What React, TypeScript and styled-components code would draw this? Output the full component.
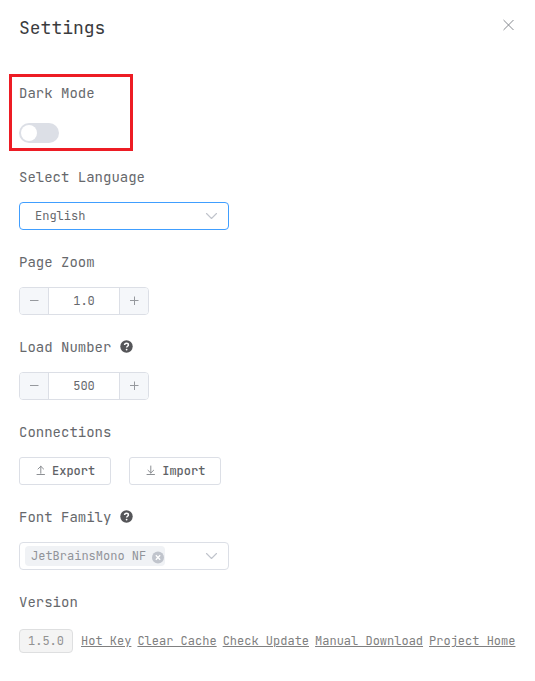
import React, { useState } from "react";
import styled, { createGlobalStyle } from "styled-components";

const GlobalStyle = createGlobalStyle`
  *, *::before, *::after { box-sizing: border-box; }
  body { margin: 0; background: #fff; }
  body, button, input, select {
    font-family: "JetBrains Mono", "DejaVu Sans Mono", monospace;
    font-size: 12px;
    color: #66686c;
  }
`;

const Dialog = styled.main`
  padding: 12px 19px 28px;
`;

const Header = styled.header`
  display: flex;
  justify-content: space-between;
  align-items: flex-start;
  height: 71px;
`;

const Title = styled.h1`
  margin: 0;
  padding-top: 4px;
  font-size: 18px;
  font-weight: 400;
  line-height: 24px;
  color: #3a3b3d;
`;

const CloseButton = styled.button`
  display: flex;
  padding: 5px 0;
  border: 0;
  background: none;
  color: #85888e;
  cursor: pointer;
`;

const Form = styled.form`
  display: flex;
  flex-direction: column;
  gap: 22px;
`;

const Field = styled.div`
  display: flex;
  flex-direction: column;
  align-items: flex-start;
  gap: 15px;
`;

const HighlightedField = styled(Field)`
  position: relative;
  align-self: flex-start;
  gap: 20px;
  margin-bottom: 2px;

  &::after {
    content: "";
    position: absolute;
    inset: -9px -38px -8px -10px;
    border: 3px solid #ed1c24;
    pointer-events: none;
  }
`;

const Label = styled.label`
  display: flex;
  align-items: center;
  gap: 9px;
  font-size: 14px;
  line-height: 20px;
`;

const Switch = styled.input`
  appearance: none;
  display: flex;
  align-items: center;
  width: 40px;
  height: 20px;
  margin: 0;
  padding: 2px;
  border-radius: 10px;
  background: #dcdfe6;
  cursor: pointer;

  &::before {
    content: "";
    width: 16px;
    height: 16px;
    border-radius: 50%;
    background: #fff;
  }
  &:checked {
    justify-content: flex-end;
    background: #409eff;
  }
`;

const SelectBox = styled.div<{ $active?: boolean }>`
  display: grid;
  grid-template-columns: 1fr 34px;
  align-items: center;
  width: 210px;
  height: 28px;
  border: 1px solid ${(p) => (p.$active ? "#409eff" : "#dcdfe6")};
  border-radius: 4px;
  color: #c0c4cc;

  svg.arrow {
    grid-area: 1 / 2;
    justify-self: center;
    pointer-events: none;
  }
`;

const NativeSelect = styled.select`
  grid-area: 1 / 1 / 2 / 3;
  appearance: none;
  height: 26px;
  padding: 0 34px 0 15px;
  border: 0;
  outline: 0;
  background: none;
`;

const TagArea = styled.div`
  display: flex;
  align-items: center;
  padding-left: 5px;
  min-width: 0;
`;

const FontTag = styled.span`
  display: flex;
  align-items: center;
  gap: 5px;
  height: 20px;
  padding: 0 1px 0 6px;
  border-radius: 4px;
  background: #f0f2f5;
  color: #909399;
  white-space: nowrap;
`;

const TagRemove = styled.button`
  display: flex;
  padding: 2px 0 0;
  border: 0;
  background: none;
  cursor: pointer;
`;

const FilterInput = styled.input`
  flex: 1;
  width: 0;
  min-width: 0;
  padding: 0;
  border: 0;
  outline: 0;
  background: none;
`;

const Stepper = styled.div`
  display: flex;
  width: 130px;
  height: 28px;
  border: 1px solid #dcdfe6;
  border-radius: 4px;
  overflow: hidden;
`;

const StepButton = styled.button<{ $side: "left" | "right" }>`
  flex: none;
  display: flex;
  align-items: center;
  justify-content: center;
  width: 29px;
  padding: 0;
  border: 0 solid #dcdfe6;
  border-${(p) => (p.$side === "left" ? "right" : "left")}-width: 1px;
  background: #f5f7fa;
  color: #96999e;
  cursor: pointer;
`;

const StepValue = styled.input`
  flex: 1;
  min-width: 0;
  padding: 0;
  border: 0;
  outline: 0;
  text-align: center;
`;

const ButtonRow = styled.div`
  display: flex;
  gap: 18px;
`;

const ActionButton = styled.button`
  display: flex;
  align-items: center;
  gap: 5px;
  height: 28px;
  padding: 0 15px;
  border: 1px solid #dcdfe6;
  border-radius: 3px;
  background: #fff;
  color: #606266;
  font-weight: 500;
  cursor: pointer;
`;

const VersionRow = styled.div`
  display: flex;
  align-items: center;
  gap: 8px;
  padding-top: 2px;
`;

const VersionTag = styled.span`
  height: 24px;
  padding: 0 8px;
  border: 1px solid #dedfe0;
  border-radius: 4px;
  background: #f4f4f4;
  color: #929292;
  line-height: 22px;
`;

const Links = styled.nav`
  display: flex;
  flex-wrap: wrap;
  gap: 6px;
  margin-right: -8px;
`;

const TextLink = styled.a`
  color: #808080;
  line-height: 20px;
  text-decoration: underline;
  white-space: nowrap;
`;

const CloseIcon = () => (
  <svg width="16" height="16" viewBox="0 0 16 16" fill="none" stroke="currentColor" strokeLinecap="round">
    <path d="M3.8 3.3l9.4 9.4M13.2 3.3l-9.4 9.4" />
  </svg>
);

const ArrowIcon = () => (
  <svg className="arrow" width="14" height="14" viewBox="0 0 14 14" fill="none" stroke="currentColor" strokeWidth="1.1" strokeLinecap="round" strokeLinejoin="round">
    <path d="M2.5 4.5l5 5 5-5" />
  </svg>
);

const HelpIcon = () => (
  <svg width="13" height="14" viewBox="0 0 13 14" aria-hidden="true">
    <circle cx="6.5" cy="6.5" r="6.2" fill="#555659" />
    <path d="M4.6 5.1c0-1.2.9-1.8 1.9-1.8s1.9.6 1.9 1.6c0 1.4-1.8 1.3-1.8 2.7" fill="none" stroke="#fff" strokeWidth="1.5" />
    <circle cx="6.6" cy="9.6" r=".9" fill="#fff" />
  </svg>
);

const RemoveIcon = () => (
  <svg width="13" height="13" viewBox="0 0 13 13" aria-hidden="true">
    <circle cx="7" cy="6.5" r="6" fill="#c0c4cc" />
    <path d="M4.8 4.3l4.4 4.4M9.2 4.3L4.8 8.7" stroke="#fff" strokeWidth="1.3" />
  </svg>
);

const SignIcon = ({ plus }: { plus?: boolean }) => (
  <svg width="12" height="12" viewBox="0 0 12 12" fill="none" stroke="currentColor">
    <path d={plus ? "M2 5.5h8.5M6.5 1.5v8.5" : "M2 5.5h8.5"} />
  </svg>
);

const TransferIcon = ({ up }: { up?: boolean }) => (
  <svg width="12" height="12" viewBox="0 0 12 12" fill="none" stroke="#808388" strokeLinecap="round" strokeLinejoin="round" strokeWidth=".9">
    <path d={up ? "M2 9.5h7.5M5.8 8.3v-7M3 4l2.8-2.7L8.6 4" : "M2 9.5h7.5M5.8 1v7M3 5.3L5.8 8l2.8-2.7"} />
  </svg>
);

interface NumberFieldProps {
  id: string;
  label: string;
  initial: number;
  step: number;
  digits: number;
  help?: boolean;
}

function NumberField({ id, label, initial, step, digits, help }: NumberFieldProps) {
  const [value, setValue] = useState(initial.toFixed(digits));
  const change = (delta: number) =>
    setValue((v) => Math.max(0, (Number(v) || 0) + delta).toFixed(digits));

  return (
    <Field>
      <Label htmlFor={id}>
        {label}
        {help && <HelpIcon />}
      </Label>
      <Stepper>
        <StepButton type="button" $side="left" aria-label={`Decrease ${label}`} onClick={() => change(-step)}>
          <SignIcon />
        </StepButton>
        <StepValue id={id} inputMode="decimal" value={value} onChange={(e) => setValue(e.target.value)} />
        <StepButton type="button" $side="right" aria-label={`Increase ${label}`} onClick={() => change(step)}>
          <SignIcon plus />
        </StepButton>
      </Stepper>
    </Field>
  );
}

const links = ["Hot Key", "Clear Cache", "Check Update", "Manual Download", "Project Home"];

export default function App() {
  const [dark, setDark] = useState(false);
  const [font, setFont] = useState("JetBrainsMono NF");

  return (
    <>
      <GlobalStyle />
      <Dialog>
        <Header>
          <Title>Settings</Title>
          <CloseButton type="button" aria-label="Close">
            <CloseIcon />
          </CloseButton>
        </Header>
        <Form onSubmit={(e) => e.preventDefault()}>
          <HighlightedField>
            <Label htmlFor="dark">Dark Mode</Label>
            <Switch id="dark" type="checkbox" role="switch" checked={dark} onChange={(e) => setDark(e.target.checked)} />
          </HighlightedField>
          <Field>
            <Label htmlFor="language">Select Language</Label>
            <SelectBox $active>
              <NativeSelect id="language">
                <option>English</option>
              </NativeSelect>
              <ArrowIcon />
            </SelectBox>
          </Field>
          <NumberField id="zoom" label="Page Zoom" initial={1} step={0.1} digits={1} />
          <NumberField id="load" label="Load Number" initial={500} step={50} digits={0} help />
          <Field>
            <Label as="span">Connections</Label>
            <ButtonRow>
              <ActionButton type="button">
                <TransferIcon up />
                Export
              </ActionButton>
              <ActionButton type="button">
                <TransferIcon />
                Import
              </ActionButton>
            </ButtonRow>
          </Field>
          <Field>
            <Label htmlFor="font">
              Font Family
              <HelpIcon />
            </Label>
            <SelectBox>
              <TagArea>
                {font && (
                  <FontTag>
                    {font}
                    <TagRemove type="button" aria-label={`Remove ${font}`} onClick={() => setFont("")}>
                      <RemoveIcon />
                    </TagRemove>
                  </FontTag>
                )}
                <FilterInput id="font" />
              </TagArea>
              <ArrowIcon />
            </SelectBox>
          </Field>
          <Field>
            <Label as="span">Version</Label>
            <VersionRow>
              <VersionTag>1.5.0</VersionTag>
              <Links>
                {links.map((text) => (
                  <TextLink key={text} href="#">
                    {text}
                  </TextLink>
                ))}
              </Links>
            </VersionRow>
          </Field>
        </Form>
      </Dialog>
    </>
  );
}
